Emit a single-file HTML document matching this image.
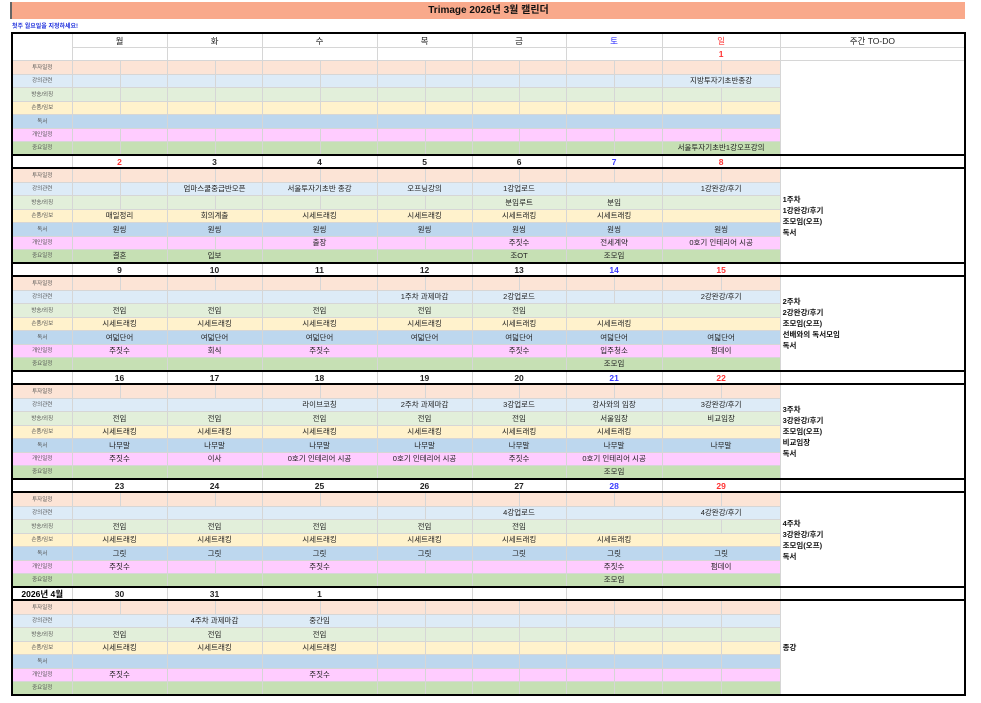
<!DOCTYPE html>
<html><head><meta charset="utf-8">
<style>
html,body{margin:0;padding:0;background:#fff;width:981px;height:703px;overflow:hidden;font-family:"Liberation Sans","Noto Sans CJK KR",sans-serif;}
.title{position:absolute;left:10px;top:2px;width:953px;height:17px;background:#f9a98b;border-left:2px solid #666;text-align:center;font-weight:bold;font-size:10px;line-height:17px;color:#111;}
.sub{position:absolute;left:12px;top:21px;font-size:6px;font-weight:bold;color:#2233dd;}
table{position:absolute;left:11px;top:32px;border-collapse:collapse;table-layout:fixed;width:954px;border:2px solid #000;}
td{border:1px solid #d6d6d6;padding:0;font-size:7.5px;text-align:center;white-space:nowrap;overflow:hidden;color:#222;line-height:10px;}
tr.h td{height:13px;font-size:8.5px;background:#fff;}
tr.h2 td{height:12px;}
tr.d td{height:11px;border-top:2px solid #000;border-bottom:2px solid #000;font-weight:bold;font-size:8.5px;background:#fff;}
tr.s td{height:12px}
tr.t td{height:12px}
tr.a td, tr.f td, tr.c td{height:13px}
td.l{font-size:5.5px;color:#555;}
tr.a td{background:#fce4d6}
tr.b td{background:#ddebf7}
tr.c td{background:#e2efda}
tr.e td{background:#fff2cc}
tr.f td{background:#bdd7ee}
tr.g td{background:#ffccff}
tr.k td{background:#c6e0b4}
td.todo{background:#fff !important;text-align:left;vertical-align:middle;font-weight:bold;font-size:7.5px;line-height:11px;padding-left:2px;color:#111;border-right:2px solid #000}
.r{color:#ff3333}.u{color:#3b3bff}
</style></head><body>
<div class="title">Trimage 2026년 3월 캘린더</div>
<div class="sub">첫주 월요일을 지정하세요!</div>
<table>
<colgroup><col style="width:60px"><col style="width:48px"><col style="width:47px"><col style="width:48px"><col style="width:47px"><col style="width:58px"><col style="width:57px"><col style="width:48px"><col style="width:47px"><col style="width:47px"><col style="width:47px"><col style="width:48px"><col style="width:48px"><col style="width:59px"><col style="width:59px"><col style="width:185px"></colgroup>
<tr class="h"><td rowspan="2"></td><td colspan="2">월</td><td colspan="2">화</td><td colspan="2">수</td><td colspan="2">목</td><td colspan="2">금</td><td colspan="2" class="u">토</td><td colspan="2" class="r">일</td><td>주간 TO-DO</td></tr>
<tr class="h h2"><td colspan="2"></td><td colspan="2"></td><td colspan="2"></td><td colspan="2"></td><td colspan="2"></td><td colspan="2"></td><td colspan="2" class="r" style="font-weight:bold">1</td><td></td></tr>

<tr class="a t"><td class="l">투자일정</td><td></td><td></td><td></td><td></td><td></td><td></td><td></td><td></td><td></td><td></td><td></td><td></td><td></td><td></td><td class="todo" rowspan="7"></td></tr>
<tr class="b s"><td class="l">강의관련</td><td></td><td></td><td></td><td></td><td></td><td></td><td></td><td></td><td></td><td></td><td></td><td></td><td colspan="2">지방투자기초반종강</td></tr>
<tr class="c t"><td class="l">방송/외징</td><td></td><td></td><td></td><td></td><td></td><td></td><td></td><td></td><td></td><td></td><td></td><td></td><td></td><td></td></tr>
<tr class="e s"><td class="l">손품/임보</td><td></td><td></td><td></td><td></td><td></td><td></td><td></td><td></td><td></td><td></td><td></td><td></td><td></td><td></td></tr>
<tr class="f t"><td class="l">독서</td><td colspan="2"></td><td colspan="2"></td><td colspan="2"></td><td colspan="2"></td><td colspan="2"></td><td colspan="2"></td><td colspan="2"></td></tr>
<tr class="g s"><td class="l">개인일정</td><td></td><td></td><td></td><td></td><td></td><td></td><td></td><td></td><td></td><td></td><td></td><td></td><td></td><td></td></tr>
<tr class="k t"><td class="l">중요일정</td><td></td><td></td><td></td><td></td><td></td><td></td><td></td><td></td><td></td><td></td><td></td><td></td><td colspan="2">서울투자기초반1강오프강의</td></tr>

<tr class="d"><td></td><td colspan="2" class="r">2</td><td colspan="2">3</td><td colspan="2">4</td><td colspan="2">5</td><td colspan="2">6</td><td colspan="2" class="u">7</td><td colspan="2" class="r">8</td><td></td></tr>
<tr class="a t"><td class="l">투자일정</td><td></td><td></td><td></td><td></td><td></td><td></td><td></td><td></td><td></td><td></td><td></td><td></td><td></td><td></td><td class="todo" rowspan="7">1주차<br>1강완강/후기<br>조모임(오프)<br>독서</td></tr>
<tr class="b s"><td class="l">강의관련</td><td></td><td></td><td colspan="2">엄마스쿨중급반오픈</td><td colspan="2">서울투자기초반 종강</td><td colspan="2">오프닝강의</td><td colspan="2">1강업로드</td><td colspan="2"></td><td colspan="2">1강완강/후기</td></tr>
<tr class="c t"><td class="l">방송/외징</td><td></td><td></td><td></td><td></td><td></td><td></td><td></td><td></td><td colspan="2">분임루트</td><td colspan="2">분임</td><td colspan="2"></td></tr>
<tr class="e s"><td class="l">손품/임보</td><td colspan="2">매일정리</td><td colspan="2">회의계출</td><td colspan="2">시세트래킹</td><td colspan="2">시세트래킹</td><td colspan="2">시세트래킹</td><td colspan="2">시세트래킹</td><td colspan="2"></td></tr>
<tr class="f t"><td class="l">독서</td><td colspan="2">원씽</td><td colspan="2">원씽</td><td colspan="2">원씽</td><td colspan="2">원씽</td><td colspan="2">원씽</td><td colspan="2">원씽</td><td colspan="2">원씽</td></tr>
<tr class="g s"><td class="l">개인일정</td><td colspan="2"></td><td></td><td></td><td colspan="2">출장</td><td></td><td></td><td colspan="2">주짓수</td><td colspan="2">전세계약</td><td colspan="2">0호기 인테리어 시공</td></tr>
<tr class="k t"><td class="l">중요일정</td><td colspan="2">결혼</td><td colspan="2">입보</td><td colspan="2"></td><td colspan="2"></td><td colspan="2">조OT</td><td colspan="2">조모임</td><td colspan="2"></td></tr>

<tr class="d"><td></td><td colspan="2">9</td><td colspan="2">10</td><td colspan="2">11</td><td colspan="2">12</td><td colspan="2">13</td><td colspan="2" class="u">14</td><td colspan="2" class="r">15</td><td></td></tr>
<tr class="a t"><td class="l">투자일정</td><td></td><td></td><td></td><td></td><td></td><td></td><td></td><td></td><td></td><td></td><td></td><td></td><td></td><td></td><td class="todo" rowspan="7">2주차<br>2강완강/후기<br>조모임(오프)<br>선배와의 독서모임<br>독서</td></tr>
<tr class="b s"><td class="l">강의관련</td><td colspan="2"></td><td colspan="2"></td><td colspan="2"></td><td colspan="2">1주차 과제마감</td><td colspan="2">2강업로드</td><td></td><td></td><td colspan="2">2강완강/후기</td></tr>
<tr class="c t"><td class="l">방송/외징</td><td colspan="2">전임</td><td colspan="2">전임</td><td colspan="2">전임</td><td colspan="2">전임</td><td colspan="2">전임</td><td colspan="2"></td><td colspan="2"></td></tr>
<tr class="e s"><td class="l">손품/임보</td><td colspan="2">시세트래킹</td><td colspan="2">시세트래킹</td><td colspan="2">시세트래킹</td><td colspan="2">시세트래킹</td><td colspan="2">시세트래킹</td><td colspan="2">시세트래킹</td><td colspan="2"></td></tr>
<tr class="f t"><td class="l">독서</td><td colspan="2">여덟단어</td><td colspan="2">여덟단어</td><td colspan="2">여덟단어</td><td colspan="2">여덟단어</td><td colspan="2">여덟단어</td><td colspan="2">여덟단어</td><td colspan="2">여덟단어</td></tr>
<tr class="g s"><td class="l">개인일정</td><td colspan="2">주짓수</td><td colspan="2">회식</td><td colspan="2">주짓수</td><td colspan="2"></td><td colspan="2">주짓수</td><td colspan="2">입주청소</td><td colspan="2">펌데이</td></tr>
<tr class="k t"><td class="l">중요일정</td><td colspan="2"></td><td colspan="2"></td><td colspan="2"></td><td colspan="2"></td><td colspan="2"></td><td colspan="2">조모임</td><td colspan="2"></td></tr>

<tr class="d"><td></td><td colspan="2">16</td><td colspan="2">17</td><td colspan="2">18</td><td colspan="2">19</td><td colspan="2">20</td><td colspan="2" class="u">21</td><td colspan="2" class="r">22</td><td></td></tr>
<tr class="a t"><td class="l">투자일정</td><td></td><td></td><td></td><td></td><td></td><td></td><td></td><td></td><td></td><td></td><td></td><td></td><td></td><td></td><td class="todo" rowspan="7">3주차<br>3강완강/후기<br>조모임(오프)<br>비교임장<br>독서</td></tr>
<tr class="b s"><td class="l">강의관련</td><td colspan="2"></td><td colspan="2"></td><td colspan="2">라이브코칭</td><td colspan="2">2주차 과제마감</td><td colspan="2">3강업로드</td><td colspan="2">강사와의 임장</td><td colspan="2">3강완강/후기</td></tr>
<tr class="c t"><td class="l">방송/외징</td><td colspan="2">전임</td><td colspan="2">전임</td><td colspan="2">전임</td><td colspan="2">전임</td><td colspan="2">전임</td><td colspan="2">서울임장</td><td colspan="2">비교임장</td></tr>
<tr class="e s"><td class="l">손품/임보</td><td colspan="2">시세트래킹</td><td colspan="2">시세트래킹</td><td colspan="2">시세트래킹</td><td colspan="2">시세트래킹</td><td colspan="2">시세트래킹</td><td colspan="2">시세트래킹</td><td colspan="2"></td></tr>
<tr class="f t"><td class="l">독서</td><td colspan="2">나무말</td><td colspan="2">나무말</td><td colspan="2">나무말</td><td colspan="2">나무말</td><td colspan="2">나무말</td><td colspan="2">나무말</td><td colspan="2">나무말</td></tr>
<tr class="g s"><td class="l">개인일정</td><td colspan="2">주짓수</td><td colspan="2">이사</td><td colspan="2">0호기 인테리어 시공</td><td colspan="2">0호기 인테리어 시공</td><td colspan="2">주짓수</td><td colspan="2">0호기 인테리어 시공</td><td colspan="2"></td></tr>
<tr class="k t"><td class="l">중요일정</td><td colspan="2"></td><td colspan="2"></td><td colspan="2"></td><td colspan="2"></td><td colspan="2"></td><td colspan="2">조모임</td><td colspan="2"></td></tr>

<tr class="d"><td></td><td colspan="2">23</td><td colspan="2">24</td><td colspan="2">25</td><td colspan="2">26</td><td colspan="2">27</td><td colspan="2" class="u">28</td><td colspan="2" class="r">29</td><td></td></tr>
<tr class="a t"><td class="l">투자일정</td><td></td><td></td><td></td><td></td><td></td><td></td><td></td><td></td><td></td><td></td><td></td><td></td><td></td><td></td><td class="todo" rowspan="7">4주차<br>3강완강/후기<br>조모임(오프)<br>독서</td></tr>
<tr class="b s"><td class="l">강의관련</td><td colspan="2"></td><td colspan="2"></td><td colspan="2"></td><td></td><td></td><td colspan="2">4강업로드</td><td colspan="2"></td><td colspan="2">4강완강/후기</td></tr>
<tr class="c t"><td class="l">방송/외징</td><td colspan="2">전임</td><td colspan="2">전임</td><td colspan="2">전임</td><td colspan="2">전임</td><td colspan="2">전임</td><td colspan="2"></td><td></td><td></td></tr>
<tr class="e s"><td class="l">손품/임보</td><td colspan="2">시세트래킹</td><td colspan="2">시세트래킹</td><td colspan="2">시세트래킹</td><td colspan="2">시세트래킹</td><td colspan="2">시세트래킹</td><td colspan="2">시세트래킹</td><td colspan="2"></td></tr>
<tr class="f t"><td class="l">독서</td><td colspan="2">그릿</td><td colspan="2">그릿</td><td colspan="2">그릿</td><td colspan="2">그릿</td><td colspan="2">그릿</td><td colspan="2">그릿</td><td colspan="2">그릿</td></tr>
<tr class="g s"><td class="l">개인일정</td><td colspan="2">주짓수</td><td></td><td></td><td colspan="2">주짓수</td><td></td><td></td><td colspan="2"></td><td colspan="2">주짓수</td><td colspan="2">펌데이</td></tr>
<tr class="k t"><td class="l">중요일정</td><td colspan="2"></td><td colspan="2"></td><td colspan="2"></td><td colspan="2"></td><td colspan="2"></td><td colspan="2">조모임</td><td colspan="2"></td></tr>

<tr class="d"><td style="color:#000">2026년 4월</td><td colspan="2">30</td><td colspan="2">31</td><td colspan="2">1</td><td colspan="2"></td><td colspan="2"></td><td colspan="2"></td><td colspan="2"></td><td></td></tr>
<tr class="a t"><td class="l">투자일정</td><td></td><td></td><td></td><td></td><td></td><td></td><td></td><td></td><td></td><td></td><td></td><td></td><td></td><td></td><td class="todo" rowspan="7">종강</td></tr>
<tr class="b s"><td class="l">강의관련</td><td colspan="2"></td><td colspan="2">4주차 과제마감</td><td colspan="2">중간임</td><td></td><td></td><td></td><td></td><td></td><td></td><td></td><td></td></tr>
<tr class="c t"><td class="l">방송/외징</td><td colspan="2">전임</td><td colspan="2">전임</td><td colspan="2">전임</td><td></td><td></td><td></td><td></td><td></td><td></td><td></td><td></td></tr>
<tr class="e s"><td class="l">손품/임보</td><td colspan="2">시세트래킹</td><td colspan="2">시세트래킹</td><td colspan="2">시세트래킹</td><td></td><td></td><td></td><td></td><td></td><td></td><td></td><td></td></tr>
<tr class="f t"><td class="l">독서</td><td colspan="2"></td><td colspan="2"></td><td colspan="2"></td><td></td><td></td><td></td><td></td><td></td><td></td><td></td><td></td></tr>
<tr class="g s"><td class="l">개인일정</td><td colspan="2">주짓수</td><td colspan="2"></td><td colspan="2">주짓수</td><td></td><td></td><td></td><td></td><td></td><td></td><td></td><td></td></tr>
<tr class="k t"><td class="l">중요일정</td><td colspan="2"></td><td colspan="2"></td><td colspan="2"></td><td></td><td></td><td></td><td></td><td></td><td></td><td></td><td></td></tr>
</table>
</body></html>
